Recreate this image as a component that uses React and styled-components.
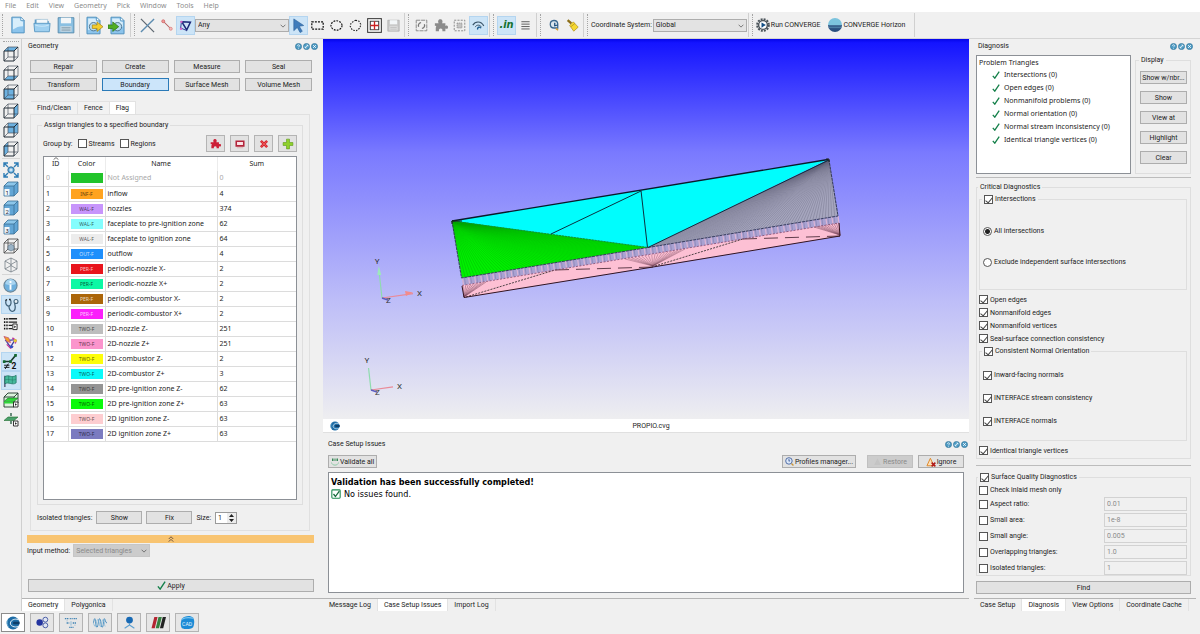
import React from "react";
import styled, { createGlobalStyle, css } from "styled-components";

const UI_FONT = `Roboto, "Liberation Sans", sans-serif`;
const LIST_FONT = `"Noto Sans", "Open Sans", sans-serif`;
const LOG_FONT = `"DejaVu Sans Condensed", "DejaVu Sans", sans-serif`;

const boundaries = [
    { id: 0, color: "#22c42a", type: "", name: "Not Assigned", sum: 0, muted: true },
    { id: 1, color: "#ffa31f", type: "INF-F", name: "inflow", sum: 4 },
    { id: 2, color: "#c795fb", type: "WAL-F", name: "nozzles", sum: 374 },
    { id: 3, color: "#84fdfd", type: "WAL-F", name: "faceplate to pre-ignition zone", sum: 62 },
    { id: 4, color: "#ececec", type: "WAL-F", name: "faceplate to ignition zone", sum: 64 },
    { id: 5, color: "#1e8ffb", type: "OUT-F", name: "outflow", sum: 4, light: true },
    { id: 6, color: "#e8141c", type: "PER-F", name: "periodic-nozzle X-", sum: 2, light: true },
    { id: 7, color: "#0cf8a4", type: "PER-F", name: "periodic-nozzle X+", sum: 2 },
    { id: 8, color: "#ab6509", type: "PER-F", name: "periodic-combustor X-", sum: 2, light: true },
    { id: 9, color: "#fb1efb", type: "PER-F", name: "periodic-combustor X+", sum: 2, light: true },
    { id: 10, color: "#bdbdbd", type: "TWO-F", name: "2D-nozzle Z-", sum: 251 },
    { id: 11, color: "#fb94cc", type: "TWO-F", name: "2D-nozzle Z+", sum: 251 },
    { id: 12, color: "#fdfd0a", type: "TWO-F", name: "2D-combustor Z-", sum: 2 },
    { id: 13, color: "#0afafa", type: "TWO-F", name: "2D-combustor Z+", sum: 3 },
    { id: 14, color: "#949494", type: "TWO-F", name: "2D pre-ignition zone Z-", sum: 62 },
    { id: 15, color: "#0afa0a", type: "TWO-F", name: "2D pre-ignition zone Z+", sum: 63 },
    { id: 16, color: "#fdcdd0", type: "TWO-F", name: "2D ignition zone Z-", sum: 63 },
    { id: 17, color: "#7b7bc0", type: "TWO-F", name: "2D ignition zone Z+", sum: 63 },
];

const problems = [
    "Intersections (0)",
    "Open edges (0)",
    "Nonmanifold problems (0)",
    "Normal orientation (0)",
    "Normal stream inconsistency (0)",
    "Identical triangle vertices (0)",
];

const thresholds = [
    ["Aspect ratio:", "0.01"],
    ["Small area:", "1e-8"],
    ["Small angle:", "0.005"],
    ["Overlapping triangles:", "1.0"],
    ["Isolated triangles:", "1"],
];

/* ---------- icons ---------- */

const Svg = ({ size = 16, w, h, box = "0 0 16 16", children }) => (
    <svg width={w || size} height={h || size} viewBox={box} fill="none" aria-hidden="true">{children}</svg>
);

const PageShape = () => (
    <>
        <path d="M2.500 1h8l3 3v11h-11z" fill="#8cc4ec" stroke="#4d8fbd" strokeWidth=".8" />
        <path d="M3.500 2h6l1 2.500 2 .5v4c-4 0-6 1-9 3z" fill="#d8eefb" />
        <path d="M10.500 1v3h3z" fill="#fff" stroke="#4d8fbd" strokeWidth=".6" />
    </>
);

const NewIcon = () => <Svg size={18}><PageShape /></Svg>;

const FolderIcon = () => (
    <Svg size={18}>
        <path d="M1.500 13V3h5l1.500 1.500h6V13z" fill="#5d9cc9" />
        <path d="M3 3h10v5H3z" fill="#f4f8fb" stroke="#8ab0cb" strokeWidth=".5" />
        <path d="M.8 6.500h14.400L14.500 14h-13z" fill="#9fd0f0" stroke="#4d8fbd" strokeWidth=".7" />
        <path d="M2 8c4 1.500 8 1.500 12 0" stroke="#c8e6f8" strokeWidth="1" />
    </Svg>
);

const SaveIcon = ({ gray }) => (
    <Svg size={gray ? 13 : 18}>
        <path d="M1 1.500h14V15H1z" fill={gray ? "#c9c9c9" : "#8ac0e2"} stroke={gray ? "#a8a8a8" : "#5588aa"} strokeWidth=".8" />
        <path d="M3.500 1.500h9v5h-9z" fill="#f3f6f8" />
        <path d="M3 9h10v5H3z" fill={gray ? "#e0e0e0" : "#c5d7e2"} />
        <path d="M4 10.500h8M4 12.500h8" stroke={gray ? "#b4b4b4" : "#7793a5"} strokeWidth=".8" />
    </Svg>
);

const ExportIcon = ({ into }) => (
    <Svg size={19}>
        <PageShape />
        <circle cx="8" cy="9" r="3.500" stroke="#4e7590" strokeWidth=".8" fill="#b8dcf2" />
        {into
            ? <path d="M0 7.500h4V5l5 4-5 4v-2.500H0z" fill="#4fae24" stroke="#2a7212" strokeWidth=".6" />
            : <path d="M7 7.500h4V5l5 4-5 4v-2.500H7z" fill="#f3cd2e" stroke="#a88412" strokeWidth=".6" />}
    </Svg>
);

const CrossIcon = () => (
    <Svg size={15}>
        <path d="M1 1l14 14" stroke="#5c6670" strokeWidth="1.300" />
        <path d="M15 1L1 15" stroke="#5c8cb0" strokeWidth="1.500" />
    </Svg>
);

const NodeIcon = () => (
    <Svg size={12}>
        <path d="M3 3l10 10" stroke="#b35a5a" strokeWidth="1.400" />
        <circle cx="3" cy="3" r="2" fill="#f29a9a" stroke="#cc6666" />
        <circle cx="13" cy="13" r="2" fill="#f7b8b8" stroke="#d98080" />
    </Svg>
);

const PolyIcon = () => (
    <Svg size={13}>
        <path d="M3.500 3.500l10.500.5-4.500 9.500z" stroke="#1c2878" strokeWidth="1.900" fill="#cfe0f5" />
        <path d="M3 3.500L2 11l7 3" stroke="#26328a" strokeWidth="1.100" />
        <circle cx="3" cy="3.500" r="1.500" fill="#d466c6" />
        <circle cx="2.500" cy="12" r="1.500" fill="#d466c6" />
    </Svg>
);

const ArrowIcon = () => (
    <Svg size={15}>
        <path d="M3 1l10.500 7-4.700.8 3.200 5.400-2.300 1.300-3-5.500L3 13.500z" fill="#3f7cbc" stroke="#2f649c" strokeWidth=".7" />
    </Svg>
);

const DashedShape = ({ kind }) => (
    <Svg size={13}>
        {kind === "rect" && <rect x="1" y="3.500" width="14" height="9" stroke="#111" strokeWidth="1.500" strokeDasharray="2.400 1.400" />}
        {kind === "ellipse" && <ellipse cx="8" cy="8" rx="6.800" ry="5.800" stroke="#111" strokeWidth="1.400" strokeDasharray="2.200 1.400" />}
        {kind === "lasso" && <path d="M8 1.500l4 1 2.500 4-1 4.500L9 14.500l-5-1-2.500-4.500 1-4z" stroke="#222" strokeWidth="1.300" strokeDasharray="2 1.500" />}
    </Svg>
);

const GridIcon = () => (
    <Svg size={15}>
        <rect x=".7" y=".7" width="14.600" height="14.600" stroke="#333" strokeWidth="1.100" fill="#fff" />
        <path d="M3.500 3.500h9v9h-9z" stroke="#444" strokeWidth="1.200" />
        <path d="M8 3.500v9M3.500 8h9" stroke="#cc2222" strokeWidth="1.400" />
    </Svg>
);

const FrameIcon = ({ dashed }) => (
    <Svg size={13}>
        <rect x="1.500" y="1.500" width="13" height="13" stroke="#8a8a8a" strokeWidth="1.200" strokeDasharray={dashed ? "2.500 1.500" : "5 1"} />
        {dashed
            ? <path d="M5 5h6v6H5z" fill="#c4c4c4" stroke="#8a8a8a" strokeDasharray="1.500 1" />
            : <path d="M4.500 9.500a3.500 3.500 0 013-5M11.500 6.500a3.500 3.500 0 01-3 5" stroke="#777" strokeWidth="1.600" />}
    </Svg>
);

const PuzzleIcon = ({ fill = "#8b8b8b", size = 14 }) => (
    <Svg size={size}>
        <path d="M1 6h4.300C4 4 5 1.500 7.200 1.500S10.500 4 9.200 6H13v3c2-1 3 0 3 1.500S15 13 13 12v3H9.500c.6-2-.3-3-1.800-3S5 13 5.800 15H2v-4c1-1.500.5-2.500-1-2z" fill={fill} />
    </Svg>
);

const EyeIcon = () => (
    <Svg size={13}>
        <path d="M1 7.500c3-5 10-5.500 13.500 1" stroke="#3a5468" strokeWidth="1.500" />
        <path d="M4 10c1-3 6-3.500 7.500 0" stroke="#3a5468" strokeWidth="1.200" />
        <path d="M7 13c-1-3 3-4 4-1.500" stroke="#1d5c90" strokeWidth="1.700" />
    </Svg>
);

const LinesIcon = () => (
    <Svg size={11}><path d="M2 2.500h12M2 6h12M2 9.500h12M2 13h12" stroke="#444" strokeWidth="1.200" /></Svg>
);

const SearchDocIcon = () => (
    <Svg size={12}>
        <path d="M13 6.500A5 5 0 108 12h5z" fill="#dbe6ee" stroke="#3c688e" strokeWidth="1.700" />
        <path d="M9 5v4l4-1" stroke="#1e4f7d" strokeWidth="1.700" />
        <path d="M10.500 12.500l3 2.500" stroke="#d59a2f" strokeWidth="1.800" />
    </Svg>
);

const BrushIcon = () => (
    <Svg size={13}>
        <path d="M2 1.500l4.500 4" stroke="#8c6e18" strokeWidth="2.800" />
        <path d="M4.500 8L9 3.500 15 10l-5.500 5z" fill="#f5d832" stroke="#a88a17" strokeWidth=".8" />
        <path d="M6 9.500l5-4" stroke="#b8941a" strokeWidth="1" />
    </Svg>
);

const GearPlayIcon = () => (
    <Svg size={14}>
        <circle cx="8" cy="8" r="6.600" stroke="#4a5359" strokeWidth="2.400" strokeDasharray="2.200 1.250" />
        <circle cx="8" cy="8" r="5" fill="#fff" stroke="#4a5359" strokeWidth="1.600" />
        <path d="M6.300 5l5 3-5 3z" fill="#134f86" />
    </Svg>
);

const HorizonIcon = () => (
    <Svg size={14}>
        <path d="M0 8a8 8 0 0116 0z" fill="#7cc3dd" />
        <path d="M0 8h16a8 8 0 01-16 0z" fill="#2a4f7e" />
        <path d="M.5 9h15M1 11h14" stroke="#6aa4c4" strokeWidth=".7" />
    </Svg>
);

const faces = {
    top: "1,5 5,1 15,1 11,5",
    bottom: "1,15 5,11 15,11 11,15",
    front: "1,5 11,5 11,15 1,15",
    right: "11,5 15,1 15,11 11,15",
    back: "5,1 15,1 15,11 5,11",
    left: "1,5 5,1 5,11 1,15",
};

const CubeIcon = ({ face }) => (
    <Svg size={16}>
        <polygon points={faces[face]} fill="#6db1e0" />
        <path d="M5 1h10v10H5zM1 15l4-4M11 15l4-4M1 5l4-4" stroke="#4a5560" strokeWidth=".7" />
        <path d="M1 5h10v10H1zM11 5l4-4" stroke="#222d36" strokeWidth="1" />
    </Svg>
);

const SolidCubeIcon = ({ n }) => (
    <Svg size={16}>
        <path d="M1 5l4-4h10v10l-4 4H1z" fill="#62a6d6" />
        <path d="M1 5l4-4h10l-4 4z" fill="#8cc6ea" />
        <path d="M1 5h10v10H1zM1 5l4-4h10l-4 4M15 1v10l-4 4" stroke="#3a6f94" strokeWidth=".8" />
        <rect x="1.500" y="8" width="5" height="6.500" fill="#f3f7fa" />
        <text x="2.400" y="13.600" fontSize="6" fill="#223" fontFamily={UI_FONT}>{n}</text>
    </Svg>
);

const FitIcon = () => (
    <Svg size={16}>
        <path d="M1 5V1h4M11 1h4v4M15 11v4h-4M5 15H1v-4M1 1l4 4M15 1l-4 4M15 15l-4-4M1 15l4-4" stroke="#2d7cb5" strokeWidth="1.400" />
        <circle cx="8" cy="8" r="3.200" fill="#5fa9db" stroke="#245f8c" strokeWidth=".8" />
        <path d="M8 6.300v3.400M6.300 8h3.400" stroke="#fff" strokeWidth=".9" />
    </Svg>
);

const InnerCubeIcon = () => (
    <Svg size={16}>
        <path d="M1 5h10v10H1zM5 1h10v10H5M1 5l4-4v10l-4 4M11 5l4-4M11 15l4-4" stroke="#444" strokeWidth=".8" />
        <path d="M5 8l3-2 3 2v3.500l-3 1.500-3-1.500z" fill="#9ab3c6" stroke="#54697a" strokeWidth=".6" />
    </Svg>
);

const HexCubeIcon = () => (
    <Svg size={16}>
        <path d="M8 1l6 3v8l-6 3-6-3V4zM8 1v14M2 4l6 3.500L14 4M2 12l6-3.500 6 3.500" stroke="#69737b" strokeWidth=".7" />
    </Svg>
);

const InfoIcon = () => (
    <Svg size={15}>
        <circle cx="8" cy="8" r="7" fill="#6fb0de" stroke="#6c8799" strokeWidth="1.200" />
        <path d="M2.500 6.500a5.500 5.500 0 0111 0c-3 1.500-8 1.500-11 0z" fill="#a9d4f0" />
        <path d="M8 7v5.500M8 3.300v2" stroke="#fff" strokeWidth="2" />
    </Svg>
);

const StethoscopeIcon = () => (
    <Svg size={16}>
        <path d="M3 3C2 7 4 9.500 6 9S9 5 7 2M6 9c0 6 5 7 6 3s-1-4 0-6" stroke="#44647c" strokeWidth="1.300" />
        <circle cx="13" cy="4.500" r="2" fill="#e8f1f7" stroke="#44647c" strokeWidth="1.100" />
        <path d="M2.500 3.500l1.500-1M6 2.500h1.500" stroke="#222" strokeWidth="1.300" />
    </Svg>
);

const ListIcon = () => (
    <Svg size={15}>
        <path d="M1 3h4M1 6.500h4M1 10h4M1 13.500h4" stroke="#111" strokeWidth="2" strokeDasharray="1.500 1" />
        <path d="M6 3h9M6 6.500h9M6 10h4M6 13.500h4" stroke="#222" strokeWidth="1.500" />
        <path d="M10.500 8.500h4.500v6h-4.500z" fill="#fff" stroke="#222" />
        <path d="M12 10l2 1.500-2 1.500z" fill="#222" />
    </Svg>
);

const PickIcon = () => (
    <Svg size={15}>
        <path d="M3 6l10-1-5 8z" stroke="#3a3f9e" strokeWidth="1.300" fill="#f3e2ef" />
        <path d="M1 1.500l5 1.500 2 5-4-1z" fill="#f2a126" stroke="#c2507a" strokeWidth=".8" />
        <path d="M10 3l4 3-1 3M4 10l4 4 3-2" stroke="#c2379a" strokeWidth="1.500" />
        <circle cx="13" cy="6" r="1.700" fill="#e6c92c" />
        <circle cx="9" cy="12.500" r="1.700" fill="#2c52c4" />
    </Svg>
);

const EdgeIcon = () => (
    <Svg size={17}>
        <path d="M2 8h6l5-6" stroke="#1b3b2a" strokeWidth="1.500" />
        <path d="M.8 6.800h2.500v2.500H.8zM6.800 6.800h2.500v2.500H6.800zM11.500 1h2.500v2.500h-2.500z" fill="#146b33" />
        <path d="M2 11.500h5M2 13.500h5M6 10l-3 5" stroke="#111" strokeWidth=".9" />
        <text x="9" y="15.500" fontSize="8" fontWeight="bold" fill="#111" fontFamily={UI_FONT}>2</text>
    </Svg>
);

const FlagIcon = () => (
    <Svg size={15}>
        <path d="M2 3v12" stroke="#335" strokeWidth="1.200" />
        <path d="M2 4c4-3 7 2 12-1.500v8c-4 3-8-1.500-12 1z" fill="#45b99b" stroke="#1e7361" strokeWidth=".8" />
        <path d="M6 3v7M10 4v7M2 7.500c4-2 8 1.500 12-1" stroke="#1e7361" strokeWidth=".5" />
    </Svg>
);

const SliceIcon = ({ half }) => (
    <Svg size={16}>
        {!half && <path d="M1 5l4-4h10v10l-4 4H1z" fill="#dcf2dc" stroke="#20372a" strokeWidth=".9" />}
        {!half && <path d="M1 5h10v10M11 5l4-4" stroke="#20372a" strokeWidth=".9" />}
        <path d="M1 9.500l4-3.500h10l-4 3.500z" fill={half ? "#4aa06c" : "#31d63a"} stroke="#1d6b2a" strokeWidth=".6" />
        {!half && <path d="M1 9.500h10v2H1z" fill="#31d63a" />}
        {half && <path d="M8 2v3M8 10v3" stroke="#2f5f48" strokeWidth="1.400" />}
        <path d="M10.500 10h4.500v5h-4.500z" fill="#fff" stroke="#222" strokeWidth=".9" />
        <path d="M12 11.200l2 1.300-2 1.300z" fill="#222" />
    </Svg>
);

const Tick = ({ size = 8, color = "#15804a" }) => (
    <Svg size={size} box="0 0 10 10"><path d="M1 6l2.500 3L9 .8" stroke={color} strokeWidth="1.600" /></Svg>
);

const Chevron = () => (
    <Svg w={6} h={4} box="0 0 8 5"><path d="M.8.8L4 4 7.200.8" stroke="#555" strokeWidth="1" /></Svg>
);

const ConvergeLogo = ({ size = 13 }) => (
    <Svg size={size}>
        <circle cx="8" cy="8" r="7.300" fill="#1f6da6" />
        <path d="M14 4C10 2.800 5.500 4.500 5 8s5 5.500 9 4" stroke="#e9f3f9" strokeWidth="1.100" />
        <path d="M15.500 6.500H9.500c-2 0-2 3 0 3h6z" fill="#0f3e68" />
        <path d="M2 4.500c-1 3-1 5 .8 8" stroke="#74b5d9" strokeWidth=".9" />
    </Svg>
);

const MoleculeIcon = () => (
    <Svg size={13}>
        <circle cx="4.500" cy="8" r="4" fill="#2334a0" />
        <circle cx="11.500" cy="4.500" r="3" fill="#dfe5f2" stroke="#4a5da6" strokeWidth="1.200" />
        <circle cx="11.500" cy="11.500" r="3" fill="#dfe5f2" stroke="#4a5da6" strokeWidth="1.200" />
    </Svg>
);

const DotsIcon = () => (
    <Svg size={14}>
        <path d="M1 3h5M7 3h3M11 3h4M3 8h3M10 8h4M6 13h5" stroke="#3f83b4" strokeWidth="1.600" strokeDasharray="1.500 .7" />
        <path d="M3 5.500h1M8 6v5M12 10.500h1" stroke="#81b2d2" />
    </Svg>
);

const WaveIcon = () => (
    <Svg size={14}>
        <path d="M0 8c1 0 1-5 2-5s1 10 2.500 10S6 3 7.500 3 9 13 10.500 13 12 3 13 3s1 5 3 5" stroke="#3e88bd" strokeWidth="1" />
        <path d="M0 8c1 0 1.500 4 2.500 4S4 4 5.500 4 7 12 8.500 12 10 4 11.500 4 13 12 14 12" stroke="#76b0d6" strokeWidth=".8" />
    </Svg>
);

const PersonIcon = () => (
    <Svg size={13}>
        <circle cx="8" cy="5" r="4.200" fill="#1769b4" />
        <path d="M8 9v3M8 11l-6 4M8 11l6 4" stroke="#5c9fd0" strokeWidth="1.300" />
    </Svg>
);

const StripesIcon = () => (
    <Svg size={15}>
        <path d="M3.500 2h3.500L4 14H.5z" fill="#b32632" />
        <path d="M8 2h3.500l-3 12H5z" fill="#35803f" />
        <path d="M12.500 2H16l-3 12H9.500z" fill="#222" />
    </Svg>
);

const CadIcon = () => (
    <Svg size={15}>
        <path d="M2 4c3-3 9-4 12-1 2 3 1 8 0 10-4 3-9 2-12 1-2-3-1-7 0-10z" fill="#1b8bd6" />
        <path d="M2 4.500c4-2 8-2 12-1" stroke="#7cc7f2" strokeWidth="1.200" />
        <text x="2.200" y="11.500" fontSize="5.500" fill="#e6f5ff" fontFamily={UI_FONT}>CAD</text>
    </Svg>
);

const WindowOrbs = () => (
    <Orbs>
        {["Help", "Float", "Close"].map((label, i) => (
            <OrbButton key={label} aria-label={label}>
                <Svg size={7} box="0 0 10 10">
                    <circle cx="5" cy="5" r="4.400" fill="#4d9bc4" stroke="#2e6f95" strokeWidth=".9" />
                    {i === 0 && <path d="M3.500 4c0-2 3-2 3 0 0 1-1.500 1-1.500 2M5 7v1" stroke="#fff" strokeWidth="1" />}
                    {i === 1 && <path d="M3 7l4-4M3 5v2h2M7 5V3H5" stroke="#fff" strokeWidth="1" />}
                    {i === 2 && <path d="M3 3l4 4M7 3L3 7" stroke="#fff" strokeWidth="1.200" />}
                </Svg>
            </OrbButton>
        ))}
    </Orbs>
);

/* ---------- viewport scene ---------- */

const lerp = (a, b, t) => [a[0] + (b[0] - a[0]) * t, a[1] + (b[1] - a[1]) * t];

const fan = (apex, from, to, count) => {
    let d = "";
    for (let i = 0; i <= count; i++) {
        const [x, y] = lerp(from, to, i / count);
        d += `M${apex[0]} ${apex[1]}L${x.toFixed(1)} ${y.toFixed(1)}`;
    }
    return d;
};

const rungs = (a0, a1, b0, b1, count) => {
    let d = "";
    for (let i = 0; i <= count; i++) {
        const p = lerp(a0, a1, i / count);
        const q = lerp(b0, b1, i / count);
        d += `M${p[0].toFixed(1)} ${p[1].toFixed(1)}L${q[0].toFixed(1)} ${q[1].toFixed(1)}`;
    }
    return d;
};

const Axes = ({ x, y, up, right, tips }) => (
    <g transform={`translate(${x} ${y})`}>
        <path d={`M0 0L${-up / 9} ${-up}`} stroke="#8fdcae" strokeWidth="1.200" />
        <path d={`M0 0L${right} ${-right / 7}`} stroke="#e98a98" strokeWidth="1.200" />
        <path d="M0 0l6 2" stroke="#5c5cc0" strokeWidth="1.500" />
        {tips && <path d={`M${-up / 9} ${-up - 3}l2.500 9h-4z`} fill="#9de8bb" />}
        {tips && <path d={`M${right} ${-right / 7 - 1}l-8-1.500 1 5z`} fill="#f28b8b" />}
        <AxisLabel x={-up / 9 - 4} y={-up - 5}>Y</AxisLabel>
        <AxisLabel x={right + 4} y={-right / 7 + 2}>X</AxisLabel>
        <AxisLabel x="4" y="5">Z</AxisLabel>
    </g>
);

const Scene = () => (
    <SceneSvg viewBox="323 39 646 380" fill="none" role="img" aria-label="Surface mesh">
        <polygon points="452,221 828,159.500 648,247.500" fill="#00fdfd" />
        <polygon points="452,221 648,247.500 462,278" fill="#00f000" />
        <polygon points="829,160 838,216 648,247.500" fill="#a6a6be" />
        <polygon points="462,278 838,216 839,223 463,285" fill="#a9a2d2" />
        <polygon points="462,285.500 839,223 840,236 464,297.500" fill="#fdc0d4" />

        <path d={fan([452, 221], [462, 278], [648, 247.500], 60)} stroke="#00a800" strokeWidth=".35" />
        <path d={fan([829, 160], [648, 247.500], [838, 216], 60)} stroke="#62627a" strokeWidth=".35" />
        <path d={rungs([462.500, 278], [838, 216], [463.500, 285], [839, 223], 62)} stroke="#dcb4d4" strokeWidth="1.200" />
        <path d={rungs([464.500, 277.600], [834, 216.600], [465.500, 284.600], [835, 223.600], 61)} stroke="#77709f" strokeWidth=".45" />
        <path d={fan([653, 266], [625, 259], [685, 249], 18)} stroke="#7c4b60" strokeWidth=".4" />
        <path d={fan([464, 297], [463, 286], [486, 282], 9)} stroke="#7c4b60" strokeWidth=".5" />
        <path d={fan([840, 235], [814, 227], [839, 223], 10)} stroke="#7c4b60" strokeWidth=".5" />
        <path d="M466 297L555 270M655 266L743 239" stroke="#222" strokeWidth=".8" strokeDasharray="2 1.200" />
        <path d="M555 270l98-3M743 239l97-3" stroke="#3a1c28" strokeWidth=".8" strokeDasharray="14 7" />

        <path d="M452 221l9.500 57 186.500-30.500L838 216l-9-56" stroke="#2c3350" strokeWidth=".9" strokeDasharray="3 .8" />
        <path d="M452 221l196 26.500" stroke="#0b8d3a" strokeWidth=".9" strokeDasharray="2 1" />
        <path d="M452 221L828 159.500" stroke="#0a1a2a" strokeWidth="1.300" />
        <path d="M641 190.500l6.500 57M641 191l-90 43M648 247.500l181-87.500" stroke="#0c3040" strokeWidth="1" />
        <path d="M462 286l2 11.500L653 267l187-31-1-13" stroke="#33141f" strokeWidth="1" />
        <path d="M462 285.500L839 223" stroke="#7b3c58" strokeWidth=".7" strokeDasharray="2 1.500" />
        <path d="M462 221h-10v3M826 159h3v3" stroke="#222" strokeWidth="1" />

        <Axes x={382} y={298} up={29} right={31} tips />
        <Axes x={371} y={390} up={22} right={22} />
    </SceneSvg>
);

/* ---------- composed controls ---------- */

const Check = ({ label, ...rest }) => (
    <CheckLabel><CheckInput type="checkbox" {...rest} />{label}</CheckLabel>
);

const Picker = ({ value, wide, disabled, label }) => (
    <SelectWrap $wide={wide}>
        <Select defaultValue={value} disabled={disabled} aria-label={label}>
            <option>{value}</option>
        </Select>
        <Chevron />
    </SelectWrap>
);

const TabStrip = ({ tabs, active }) => (
    <Tabs role="tablist">
        {tabs.map((t) => <Tab key={t} role="tab" aria-selected={t === active} $active={t === active}>{t}</Tab>)}
    </Tabs>
);

const TopToolbar = () => (
    <Toolbar>
        <Grip />
        <ToolButton $large aria-label="New"><NewIcon /></ToolButton>
        <ToolButton $large aria-label="Open"><FolderIcon /></ToolButton>
        <ToolButton $large aria-label="Save"><SaveIcon /></ToolButton>
        <Divider />
        <ToolButton $large aria-label="Export"><ExportIcon /></ToolButton>
        <ToolButton $large aria-label="Import"><ExportIcon into /></ToolButton>
        <Divider />
        <Grip />
        <ToolButton aria-label="Vertex"><CrossIcon /></ToolButton>
        <ToolButton aria-label="Edge"><NodeIcon /></ToolButton>
        <ToolButton $on aria-label="Triangle"><PolyIcon /></ToolButton>
        <Picker value="Any" label="Pick filter" wide />
        <ToolButton $on aria-label="Cursor"><ArrowIcon /></ToolButton>
        <ToolButton aria-label="Box pick"><DashedShape kind="rect" /></ToolButton>
        <ToolButton aria-label="Ellipse pick"><DashedShape kind="ellipse" /></ToolButton>
        <ToolButton aria-label="Lasso pick"><DashedShape kind="lasso" /></ToolButton>
        <ToolButton aria-label="Grid pick"><GridIcon /></ToolButton>
        <ToolButton aria-label="Store pick"><SaveIcon gray /></ToolButton>
        <Divider />
        <Grip />
        <ToolButton aria-label="Swap"><FrameIcon /></ToolButton>
        <ToolButton aria-label="Parts"><PuzzleIcon /></ToolButton>
        <ToolButton aria-label="Bounds"><FrameIcon dashed /></ToolButton>
        <ToolButton $on aria-label="Visibility"><EyeIcon /></ToolButton>
        <Divider />
        <Grip />
        <ToolButton $on aria-label="Inputs"><InText>.in</InText></ToolButton>
        <ToolButton aria-label="Lines"><LinesIcon /></ToolButton>
        <Divider />
        <Grip />
        <ToolButton aria-label="Inspect"><SearchDocIcon /></ToolButton>
        <ToolButton aria-label="Clean"><BrushIcon /></ToolButton>
        <Divider />
        <Grip />
        <ToolLabel>Coordinate System:</ToolLabel>
        <Picker value="Global" label="Coordinate System" wide />
        <Divider />
        <Grip />
        <LaunchButton><GearPlayIcon />Run CONVERGE</LaunchButton>
        <LaunchButton><HorizonIcon />CONVERGE Horizon</LaunchButton>
        <Divider />
    </Toolbar>
);

const SideTools = () => (
    <SideBar>
        <SideGrip />
        {Object.keys(faces).map((f) => <SideButton key={f} aria-label={`View ${f}`}><CubeIcon face={f} /></SideButton>)}
        <SideDivider />
        <SideButton aria-label="Fit"><FitIcon /></SideButton>
        {[1, 2, 3].map((n) => <SideButton key={n} aria-label={`Saved view ${n}`}><SolidCubeIcon n={n} /></SideButton>)}
        <SideButton aria-label="Inside"><InnerCubeIcon /></SideButton>
        <SideButton aria-label="Isometric"><HexCubeIcon /></SideButton>
        <SideDivider />
        <SideButton aria-label="Info"><InfoIcon /></SideButton>
        <SideButton $on aria-label="Diagnosis"><StethoscopeIcon /></SideButton>
        <SideButton aria-label="List"><ListIcon /></SideButton>
        <SideButton aria-label="Pick"><PickIcon /></SideButton>
        <SideButton $on aria-label="Edges"><EdgeIcon /></SideButton>
        <SideButton $on aria-label="Boundaries"><FlagIcon /></SideButton>
        <SideButton aria-label="Slice"><SliceIcon /></SideButton>
        <SideButton aria-label="Clip"><SliceIcon half /></SideButton>
    </SideBar>
);

const GeometryDock = () => (
    <LeftDock>
        <LeftBody>
            <DockTitle>Geometry<WindowOrbs /></DockTitle>
            <ModeGrid>
                {["Repair", "Create", "Measure", "Seal", "Transform", "Boundary", "Surface Mesh", "Volume Mesh"].map((m) => (
                    <Button key={m} $active={m === "Boundary"}>{m}</Button>
                ))}
            </ModeGrid>
            <InnerTabs role="tablist">
                {["Find/Clean", "Fence", "Flag"].map((t) => (
                    <InnerTab key={t} role="tab" aria-selected={t === "Flag"} $active={t === "Flag"}>{t}</InnerTab>
                ))}
            </InnerTabs>
            <FlagPanel>
                <AssignGroup>
                    <Legend>Assign triangles to a specified boundary</Legend>
                    <GroupRow>
                        <span>Group by:</span>
                        <Check label="Streams" />
                        <Check label="Regions" />
                        <Spacer />
                        <SquareButtons>
                            <SquareButton aria-label="Merge"><PuzzleIcon fill="#cc1f36" size={11} /></SquareButton>
                            <SquareButton aria-label="Box">
                                <Svg size={10}><path d="M2 3.500h12v7.500H2z" fill="#fbe3e6" stroke="#b3243a" strokeWidth="2.500" /><path d="M3 14h10" stroke="#d99" /></Svg>
                            </SquareButton>
                            <SquareButton aria-label="Delete">
                                <Svg size={10}><path d="M3 3l10 10M13 3L3 13" stroke="#d8262f" strokeWidth="4.200" /><path d="M4 4l8 8M12 4l-8 8" stroke="#f0716f" strokeWidth="1" /></Svg>
                            </SquareButton>
                            <SquareButton aria-label="Add">
                                <Svg size={12}><path d="M6 1.500h4V6h4.500v4H10v4.500H6V10H1.500V6H6z" fill="#8fd02c" stroke="#5c9a18" strokeWidth=".8" /></Svg>
                            </SquareButton>
                        </SquareButtons>
                    </GroupRow>
                    <TableBox>
                        <Table>
                            <colgroup><IdCol /><ColorCol /><col /><SumCol /></colgroup>
                            <thead>
                                <tr><th><SortMark><Svg w={6} h={3} box="0 0 8 4"><path d="M.8 3.400L4 .8l3.200 2.600" stroke="#444" strokeWidth="1" /></Svg></SortMark>ID</th><th>Color</th><th>Name</th><th>Sum</th></tr>
                            </thead>
                            <tbody>
                                {boundaries.map((b) => (
                                    <Row key={b.id} $muted={b.muted}>
                                        <td>{b.id}</td>
                                        <td><Swatch $color={b.color} $light={b.light}>{b.type}</Swatch></td>
                                        <td>{b.name}</td>
                                        <td>{b.sum}</td>
                                    </Row>
                                ))}
                            </tbody>
                        </Table>
                    </TableBox>
                </AssignGroup>
                <IsolatedRow>
                    <span>Isolated triangles:</span>
                    <Button $fixed>Show</Button>
                    <Button $fixed>Fix</Button>
                    <SizeLabel>Size:
                        <Spin>
                            <SpinInput defaultValue="1" />
                            <Svg w={8} h={10} box="0 0 8 10"><path d="M4 1l2.500 3h-5zM4 9l2.500-3h-5z" fill="#222" /></Svg>
                        </Spin>
                    </SizeLabel>
                </IsolatedRow>
            </FlagPanel>
        </LeftBody>
        <OrangeBar aria-label="Collapse">
            <Svg w={6} h={6} box="0 0 8 8"><path d="M1 4l3-3 3 3M1 7.500l3-3 3 3" stroke="#433" strokeWidth="1" /></Svg>
        </OrangeBar>
        <MethodRow><span>Input method:</span><Picker value="Selected triangles" label="Input method" disabled /></MethodRow>
        <ApplyButton><Tick size={9} />Apply</ApplyButton>
        <TabStrip tabs={["Geometry", "Polygonica"]} active="Geometry" />
    </LeftDock>
);

const CenterColumn = () => (
    <Center>
        <Viewport><Scene /></Viewport>
        <ViewFooter><ConvergeLogo size={10} /><span>PROPIO.cvg</span></ViewFooter>
        <IssuesBody>
            <DockTitle>Case Setup Issues<WindowOrbs /></DockTitle>
            <IssueTools>
                <Button $pad>
                    <Svg size={8}><path d="M3 1v5M6 1v5M10 1v5M13 1v5" stroke="#187a3f" strokeWidth="1.700" /><path d="M1 9c1 7 13 7 14 0" stroke="#8fcba8" strokeWidth="2" /></Svg>
                    Validate all
                </Button>
                <Spacer />
                <Button $pad $gapAfter>
                    <Svg size={9}><circle cx="7" cy="7" r="5.800" fill="#dce8f8" stroke="#2e4f93" strokeWidth="1.400" /><path d="M7 3.500v4l2-1" stroke="#2e4f93" strokeWidth="1.400" /><path d="M11.500 11.500l3.500 3.500" stroke="#c9963d" strokeWidth="2.500" /></Svg>
                    Profiles manager...
                </Button>
                <Button $fixed disabled>
                    <Svg size={9}><path d="M8 2l6 12H2z" fill="#c4c4c4" /></Svg>
                    Restore
                </Button>
                <Button $fixed>
                    <Svg size={10}><path d="M7 2l5.500 12h-11z" fill="#fbe0bd" stroke="#e08a2c" strokeWidth="1.600" /><path d="M9 9l6 6M15 9l-6 6" stroke="#b01818" strokeWidth="2.400" /></Svg>
                    Ignore
                </Button>
            </IssueTools>
            <Log>
                <LogTitle>Validation has been successfully completed!</LogTitle>
                <LogLine>
                    <Svg size={10} box="0 0 12 12"><rect x="1" y="1" width="10" height="10" rx="1" stroke="#1e8a50" strokeWidth="1.300" /><path d="M3 6l2.300 3L10 2.500" stroke="#14693a" strokeWidth="1.500" /></Svg>
                    No issues found.
                </LogLine>
            </Log>
        </IssuesBody>
        <TabStrip tabs={["Message Log", "Case Setup Issues", "Import Log"]} active="Case Setup Issues" />
    </Center>
);

const DiagnosisDock = () => (
    <RightDock>
        <RightBody>
            <DockTitle>Diagnosis<WindowOrbs /></DockTitle>
            <ListRow>
                <ProblemBox>
                    <p>Problem Triangles</p>
                    <ul>
                        {problems.map((p) => <li key={p}><Tick />{p}</li>)}
                    </ul>
                </ProblemBox>
                <DisplayGroup>
                    <Legend>Display</Legend>
                    {["Show w/nbr...", "Show", "View at", "Highlight", "Clear"].map((b) => <Button key={b}>{b}</Button>)}
                </DisplayGroup>
            </ListRow>
            <Rule />
            <OuterGroup>
                <Legend>Critical Diagnostics</Legend>
                <RadioGroup>
                    <Legend><Check label="Intersections" defaultChecked /></Legend>
                    <CheckLabel><RadioInput type="radio" name="scope" defaultChecked />All intersections</CheckLabel>
                    <CheckLabel><RadioInput type="radio" name="scope" />Exclude independent surface intersections</CheckLabel>
                </RadioGroup>
                <CheckStack>
                    <Check label="Open edges" defaultChecked />
                    <Check label="Nonmanifold edges" defaultChecked />
                    <Check label="Nonmanifold vertices" defaultChecked />
                    <Check label="Seal-surface connection consistency" defaultChecked />
                </CheckStack>
                <NormalsGroup>
                    <Legend><Check label="Consistent Normal Orientation" defaultChecked /></Legend>
                    <Check label="Inward-facing normals" defaultChecked />
                    <Check label="INTERFACE stream consistency" defaultChecked />
                    <Check label="INTERFACE normals" defaultChecked />
                </NormalsGroup>
                <CheckStack>
                    <Check label="Identical triangle vertices" defaultChecked />
                </CheckStack>
            </OuterGroup>
            <Rule $spaced />
            <QualityGroup>
                <Legend><Check label="Surface Quality Diagnostics" defaultChecked /></Legend>
                <Check label="Check inlaid mesh only" />
                {thresholds.map(([label, value]) => (
                    <Threshold key={label}>
                        <Check label={label} />
                        <ValueInput defaultValue={value} disabled aria-label={label} />
                    </Threshold>
                ))}
            </QualityGroup>
            <Spacer />
            <Button>Find</Button>
        </RightBody>
        <TabStrip tabs={["Case Setup", "Diagnosis", "View Options", "Coordinate Cache"]} active="Diagnosis" />
    </RightDock>
);

const App = () => {
    return (
        <Window>
            <GlobalStyle />
            <MenuBar>
                {["File", "Edit", "View", "Geometry", "Pick", "Window", "Tools", "Help"].map((m) => <button key={m}>{m}</button>)}
            </MenuBar>
            <TopToolbar />
            <Main>
                <SideTools />
                <GeometryDock />
                <CenterColumn />
                <DiagnosisDock />
            </Main>
            <ModuleBar>
                <ModuleButton $active aria-label="Studio"><ConvergeLogo size={14} /></ModuleButton>
                <ModuleButton aria-label="Chemistry"><MoleculeIcon /></ModuleButton>
                <ModuleButton aria-label="Mechanism"><DotsIcon /></ModuleButton>
                <ModuleButton aria-label="Line plotting"><WaveIcon /></ModuleButton>
                <ModuleButton aria-label="Post-processing"><PersonIcon /></ModuleButton>
                <ModuleButton aria-label="Visualization"><StripesIcon /></ModuleButton>
                <ModuleButton aria-label="CAD"><CadIcon /></ModuleButton>
            </ModuleBar>
        </Window>
    )
}

export default App;

const GlobalStyle = createGlobalStyle`
    * {
        box-sizing : border-box;
    }

    body {
        margin      : 0;
        background  : #f0f0f0;
        color       : #1c1c1c;
        font-family : ${UI_FONT};
        font-size   : 7px;
        line-height : 10px;
    }

    button, input, select {
        margin      : 0;
        padding     : 0;
        border      : 0;
        background  : none;
        color       : inherit;
        font        : inherit;
        line-height : inherit;
    }

    fieldset {
        min-width : 0;
        margin    : 0;
        border    : 1px solid #dedede;
    }

    p, ul {
        margin     : 0;
        padding    : 0;
        list-style : none;
    }

    svg {
        display     : block;
        flex-shrink : 0;
    }
`

const Window = styled.div`
    display        : flex;
    flex-direction : column;
    min-height     : 100vh;
`

const Spacer = styled.div`
    flex : 1;
`

const MenuBar = styled.nav`
    display     : flex;
    gap         : 10px;
    height      : 12px;
    padding     : 0 5px;
    background  : #fff;
    color       : #8c8c8c;
    font-family : ${LIST_FONT};
`

const Toolbar = styled.div`
    display       : flex;
    align-items   : center;
    height        : 27px;
    border-bottom : 1px solid #d4d4d4;
    white-space   : nowrap;
`

const Grip = styled.span`
    width       : 2px;
    height      : 22px;
    margin      : 0 2px;
    border-left : 1px dotted #a5a5a5;
`

const Divider = styled.span`
    width       : 2px;
    height      : 24px;
    margin-left : 1px;
    border-left : 1px solid #d0d0d0;
`

const toggled = css`
    background : #cce4f7;
    box-shadow : inset 0 0 0 1px #b4d5f0;
`

const ToolButton = styled.button`
    display         : flex;
    align-items     : center;
    justify-content : center;
    flex-shrink     : 0;
    width           : ${({ $large }) => $large ? "24px" : "19px"};
    height          : 19px;
    ${({ $on }) => $on && toggled}
`

const InText = styled.span`
    color       : #14702c;
    font-family : "DejaVu Sans Condensed", sans-serif;
    font-size   : 11px;
    font-style  : italic;
    font-weight : bold;
`

const ToolLabel = styled.span`
    margin-right : 1px;
`

const LaunchButton = styled.button`
    display      : flex;
    align-items  : center;
    gap          : 1px;
    margin-right : 8px;
`

const SelectWrap = styled.div`
    position : relative;
    width    : ${({ $wide }) => $wide ? "94px" : "77px"};

    svg {
        position       : absolute;
        top            : 5px;
        right          : 3px;
        pointer-events : none;
    }
`

const Select = styled.select`
    display      : block;
    appearance   : none;
    width        : 100%;
    height       : 13px;
    padding-left : 2px;
    border       : 1px solid #adadad;
    background   : #e3e3e3;

    &:disabled {
        border-color : #c6c6c6;
        background   : #cccccc;
        color        : #8a8a8a;
        opacity      : 1;
    }
`

const Main = styled.main`
    display : flex;
    flex    : 1;
`

const SideBar = styled.div`
    display        : flex;
    flex-direction : column;
    align-items    : center;
    width          : 22px;
    padding-top    : 2px;
    border-right   : 1px solid #cfcfcf;
`

const SideGrip = styled.span`
    width         : 16px;
    height        : 2px;
    margin-bottom : 1px;
    border-top    : 1px dotted #a5a5a5;
`

const SideDivider = styled.span`
    width      : 18px;
    height     : 2px;
    border-top : 1px solid #d6d6d6;
`

const SideButton = styled.button`
    display         : flex;
    align-items     : center;
    justify-content : center;
    width           : 20px;
    height          : 19px;
    ${({ $on }) => $on && toggled}
`

const Button = styled.button`
    display         : flex;
    align-items     : center;
    justify-content : center;
    gap             : 1px;
    width           : ${({ $fixed }) => $fixed ? "46px" : "auto"};
    height          : 13px;
    padding         : 0 ${({ $pad }) => $pad ? "2px" : "0"};
    margin-right    : ${({ $gapAfter }) => $gapAfter ? "6px" : "0"};
    border          : 1px solid #adadad;
    background      : #e2e2e2;
    white-space     : nowrap;

    ${({ $active }) => $active && css`
        border-color : #2a7ab8;
        background   : #cce5fa;
    `}

    &:disabled {
        border-color : #c0c0c0;
        background   : #cccccc;
        color        : #8a8a8a;
    }
`

const DockTitle = styled.div`
    display         : flex;
    align-items     : center;
    justify-content : space-between;
    height          : 14px;
`

const Orbs = styled.div`
    display : flex;
    gap     : 1px;
`

const OrbButton = styled.button`
    width  : 7px;
    height : 7px;
`

const LeftDock = styled.section`
    display        : flex;
    flex-direction : column;
    flex           : 0 0 301px;
`

const LeftBody = styled.div`
    display        : flex;
    flex-direction : column;
    flex           : 1;
    margin         : 0 11px 0 8px;

    ${DockTitle} {
        margin : 0 -6px 0 -2px;
    }
`

const ModeGrid = styled.div`
    display               : grid;
    grid-template-columns : repeat(4, 1fr);
    gap                   : 5px;
    margin-top            : 7px;
`

const InnerTabs = styled.div`
    display     : flex;
    margin-top  : 10px;
    margin-left : 1px;
`

const InnerTab = styled.button`
    height       : 13px;
    padding      : 0 6px;
    border       : 1px solid #e2e2e2;
    border-width : 1px 1px 0 0;
    background   : ${({ $active }) => $active ? "#fff" : "#f2f2f2"};
`

const FlagPanel = styled.div`
    display        : flex;
    flex-direction : column;
    flex           : 1;
    margin-right   : 2px;
    padding        : 5px 6px 6px;
    border         : 1px solid #e0e0e0;
`

const Legend = styled.legend`
    height      : 10px;
    padding     : 0 2px;
    margin-left : -1px;
    white-space : nowrap;
`

const AssignGroup = styled.fieldset`
    display        : flex;
    flex-direction : column;
    flex           : 1;
    padding        : 5px 5px 4px;
`

const GroupRow = styled.div`
    display     : flex;
    align-items : center;
    gap         : 5px;
    height      : 17px;
`

const SquareButtons = styled.div`
    display : flex;
    gap     : 5px;
`

const SquareButton = styled.button`
    display         : flex;
    align-items     : center;
    justify-content : center;
    width           : 19px;
    height          : 17px;
    border          : 1px solid #b4b4b4;
    background      : #e2e2e2;
`

const TableBox = styled.div`
    flex       : 1;
    margin-top : 4px;
    border     : 1px solid #8c9096;
    background : #fff;
`

const IdCol = styled.col`
    width : 24px;
`

const ColorCol = styled.col`
    width : 37px;
`

const SumCol = styled.col`
    width : 79px;
`

const Table = styled.table`
    width           : 100%;
    table-layout    : fixed;
    border-collapse : collapse;
    font-family     : ${LIST_FONT};

    th {
        position     : relative;
        height       : 14px;
        padding      : 0;
        border-right : 1px solid #ececec;
        font-weight  : normal;
    }

    td {
        height        : 15px;
        padding       : 0 2px;
        border-right  : 1px solid #dcdcdc;
        border-bottom : 1px solid #dcdcdc;
        white-space   : nowrap;
    }

    th:last-child, td:last-child {
        border-right : 0;
    }
`

const SortMark = styled.span`
    position : absolute;
    top      : 0;
    left     : 9px;
`

const Row = styled.tr`
    color : ${({ $muted }) => $muted ? "#a8a8a8" : "inherit"};
`

const Swatch = styled.div`
    height      : 10px;
    background  : ${({ $color }) => $color};
    color       : ${({ $light }) => $light ? "#ffffffc0" : "#000000b0"};
    font-size   : 5px;
    text-align  : center;
`

const IsolatedRow = styled.div`
    display     : flex;
    align-items : center;
    gap         : 4px;
    margin-top  : 6px;
`

const SizeLabel = styled.label`
    display     : flex;
    align-items : center;
    gap         : 4px;
`

const Spin = styled.span`
    display      : flex;
    align-items  : center;
    width        : 22px;
    height       : 12px;
    border       : 1px solid #9a9a9a;
    background   : #fff;
    overflow     : hidden;

    svg {
        width      : 9px;
        background : #ececec;
    }
`

const SpinInput = styled.input`
    width        : 11px;
    padding-left : 2px;
`

const OrangeBar = styled.button`
    display         : flex;
    align-items     : center;
    justify-content : center;
    height          : 8px;
    margin          : 4px 9px 0 5px;
    background      : #f8c471;
`

const MethodRow = styled.div`
    display     : flex;
    align-items : center;
    gap         : 3px;
    margin      : 1px 0 0 5px;
`

const ApplyButton = styled(Button)`
    margin : 22px 9px 6px 6px;
`

const Tabs = styled.div`
    display    : flex;
    border-top : 1px solid #b4b4b4;
`

const Tab = styled.button`
    height       : 12px;
    padding      : 0 6px;
    border       : 0 solid #e2e2e2;
    border-right-width : 1px;
    background   : ${({ $active }) => $active ? "#fff" : "transparent"};
    white-space  : nowrap;
`

const Center = styled.section`
    display        : flex;
    flex-direction : column;
    flex           : 1;
    min-width      : 0;
`

const Viewport = styled.div`
    display    : flex;
    flex       : 1;
    background : linear-gradient(#0505e8, #1414ff 1%, #7a7aff 30%, #bcbcf8 68%, #eeeef0);
`

const SceneSvg = styled.svg`
    flex   : 1;
    width  : 100%;
    min-height : 0;
`

const AxisLabel = styled.text`
    fill        : #333;
    font-family : ${UI_FONT};
    font-size   : 8px;
`

const ViewFooter = styled.div`
    display       : flex;
    align-items   : center;
    height        : 14px;
    padding       : 0 7px;
    background    : #fff;
    border-bottom : 1px solid #e0e0e0;

    span {
        flex       : 1;
        text-align : center;
    }
`

const IssuesBody = styled.div`
    padding : 4px 5px 5px;

    ${DockTitle} {
        margin-right : -4px;
    }
`

const IssueTools = styled.div`
    display : flex;
    gap     : 5px;
    margin  : 4px 0;
`

const Log = styled.div`
    min-height  : 121px;
    padding     : 3px 2px;
    border      : 1px solid #8c9096;
    background  : #fff;
    color       : #000;
    font-family : ${LOG_FONT};
    font-size   : 9px;
    line-height : 12px;
`

const LogTitle = styled.p`
    font-weight : bold;
`

const LogLine = styled.p`
    display     : flex;
    align-items : center;
    gap         : 3px;
`

const RightDock = styled.section`
    display        : flex;
    flex-direction : column;
    flex           : 0 0 226px;
    padding-right  : 4px;
    margin-left    : 5px;
`

const RightBody = styled.div`
    display        : flex;
    flex-direction : column;
    flex           : 1;
    padding        : 0 5px 4px 2px;

    ${DockTitle} {
        margin : 0 -2px 0 2px;
    }
`

const ListRow = styled.div`
    display    : flex;
    gap        : 4px;
    margin-top : 2px;
`

const ProblemBox = styled.div`
    flex        : 1;
    padding     : 2px;
    border      : 1px solid #8c9096;
    background  : #fff;
    font-family : ${LIST_FONT};

    li {
        display     : flex;
        align-items : center;
        gap         : 4px;
        height      : 13px;
        margin-left : 13px;
    }
`

const DisplayGroup = styled.fieldset`
    display        : flex;
    flex-direction : column;
    gap            : 7px;
    width          : 56px;
    padding        : 6px 3px 9px 4px;
`

const Rule = styled.hr`
    width      : 100%;
    height     : 1px;
    margin     : ${({ $spaced }) => $spaced ? "6px 0" : "3px 0 4px"};
    border     : 0;
    background : #bcbcbc;
`

const OuterGroup = styled.fieldset`
    padding : 2px 2px 0;
`

const CheckLabel = styled.label`
    display     : inline-flex;
    align-items : center;
    gap         : 2px;
    white-space : nowrap;
`

const CheckInput = styled.input`
    appearance : none;
    position   : relative;
    width      : 9px;
    height     : 9px;
    border     : 1px solid #555;
    background : #fff;

    &:checked::after {
        content      : "";
        position     : absolute;
        top          : 0;
        left         : 2px;
        width        : 3px;
        height       : 6px;
        border       : solid #444;
        border-width : 0 1px 1px 0;
        transform    : rotate(40deg);
    }
`

const RadioInput = styled.input`
    appearance    : none;
    width         : 9px;
    height        : 9px;
    border        : 1px solid #555;
    border-radius : 50%;
    background    : #fff;

    &:checked {
        background : radial-gradient(circle, #222 2px, #fff 3px);
    }
`

const RadioGroup = styled.fieldset`
    display        : flex;
    flex-direction : column;
    gap            : 21px;
    padding        : 22px 3px;
    margin-right   : 1px;
`

const CheckStack = styled.div`
    display        : flex;
    flex-direction : column;
    padding        : 3px 0 1px;

    label {
        height : 13px;
    }
`

const NormalsGroup = styled.fieldset`
    display        : flex;
    flex-direction : column;
    gap            : 13px;
    padding        : 14px 3px;
    margin-right   : 1px;
`

const QualityGroup = styled.fieldset`
    display        : flex;
    flex-direction : column;
    gap            : 2px;
    padding        : 3px 3px 0 2px;
`

const Threshold = styled.div`
    display               : grid;
    grid-template-columns : 1fr 83px;
    align-items           : center;
`

const ValueInput = styled.input`
    width        : 100%;
    height       : 14px;
    padding-left : 2px;
    border       : 1px solid #d2d2d2;
    color        : #8a8a8a;
`

const ModuleBar = styled.footer`
    display     : flex;
    align-items : center;
    gap         : 5px;
    height      : 23px;
    padding     : 0 1px;
`

const ModuleButton = styled.button`
    display         : flex;
    align-items     : center;
    justify-content : center;
    width           : 24px;
    height          : 19px;
    border          : 1px solid ${({ $active }) => $active ? "#8c8c8c" : "#b4b4b4"};
    background      : ${({ $active }) => $active ? "#fff" : "#e6e6e6"};
`
